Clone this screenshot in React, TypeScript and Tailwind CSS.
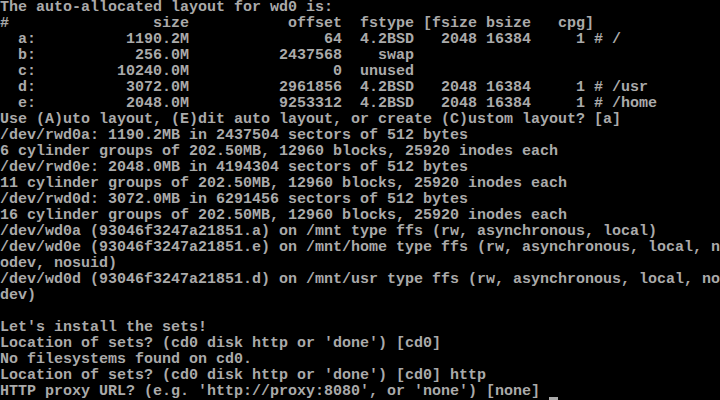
const lines = [
  "The auto-allocated layout for wd0 is:",
  "#                size           offset  fstype [fsize bsize   cpg]",
  "  a:          1190.2M               64  4.2BSD   2048 16384     1 # /",
  "  b:           256.0M          2437568    swap",
  "  c:         10240.0M                0  unused",
  "  d:          3072.0M          2961856  4.2BSD   2048 16384     1 # /usr",
  "  e:          2048.0M          9253312  4.2BSD   2048 16384     1 # /home",
  "Use (A)uto layout, (E)dit auto layout, or create (C)ustom layout? [a]",
  "/dev/rwd0a: 1190.2MB in 2437504 sectors of 512 bytes",
  "6 cylinder groups of 202.50MB, 12960 blocks, 25920 inodes each",
  "/dev/rwd0e: 2048.0MB in 4194304 sectors of 512 bytes",
  "11 cylinder groups of 202.50MB, 12960 blocks, 25920 inodes each",
  "/dev/rwd0d: 3072.0MB in 6291456 sectors of 512 bytes",
  "16 cylinder groups of 202.50MB, 12960 blocks, 25920 inodes each",
  "/dev/wd0a (93046f3247a21851.a) on /mnt type ffs (rw, asynchronous, local)",
  "/dev/wd0e (93046f3247a21851.e) on /mnt/home type ffs (rw, asynchronous, local, n",
  "odev, nosuid)",
  "/dev/wd0d (93046f3247a21851.d) on /mnt/usr type ffs (rw, asynchronous, local, no",
  "dev)",
  "",
  "Let's install the sets!",
  "Location of sets? (cd0 disk http or 'done') [cd0]",
  "No filesystems found on cd0.",
  "Location of sets? (cd0 disk http or 'done') [cd0] http",
]

const prompt = "HTTP proxy URL? (e.g. 'http://proxy:8080', or 'none') [none] "

export default function App() {
  return (
    <div className="w-[720px] h-[400px] bg-black overflow-hidden text-[#aaaaaa] font-['Liberation_Mono',monospace] text-[15px] leading-[16px] font-bold">
      {lines.map((line, i) => (
        <div key={i} className="h-[16px] whitespace-pre">
          {line}
        </div>
      ))}
      {/* last line with the block cursor sitting on the bottom edge */}
      <div className="h-[16px] whitespace-pre flex items-end">
        <span className="self-start">{prompt}</span>
        <span className="w-[9px] h-[3px] bg-[#aaaaaa]" />
      </div>
    </div>
  )
}
